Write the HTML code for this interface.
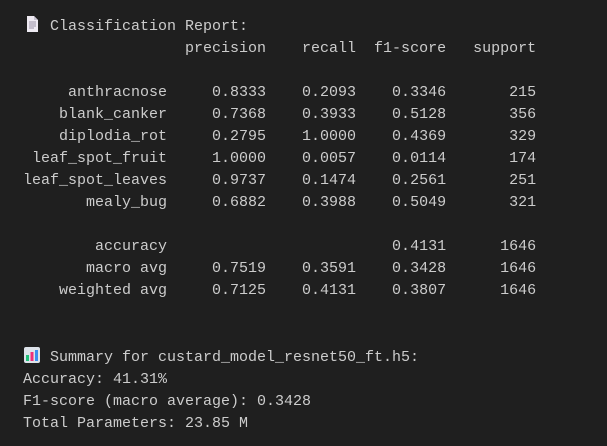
<!DOCTYPE html>
<html><head><meta charset="utf-8"><style>
html,body{margin:0;padding:0;background:#1f1f1f;width:607px;height:446px;overflow:hidden}
pre{margin:0;position:absolute;left:23px;top:15px;font-family:"Liberation Mono",monospace;font-size:15px;line-height:22px;color:#cccccc;white-space:pre}
.ic{display:inline-block;width:18px;height:18px;vertical-align:-3px}
</style></head><body>
<pre><svg class="ic" viewBox="0 0 18 18"><path d="M4 1h7l4 4v12H4z" fill="#eeeaf2"/><path d="M11 1v4h4" fill="#c9c3d2"/><path d="M6 7h7M6 9h7M6 11h7M6 13h5" stroke="#9a92a6" stroke-width="1"/></svg> Classification Report:
                  precision    recall  f1-score   support

     anthracnose     0.8333    0.2093    0.3346       215
    blank_canker     0.7368    0.3933    0.5128       356
    diplodia_rot     0.2795    1.0000    0.4369       329
 leaf_spot_fruit     1.0000    0.0057    0.0114       174
leaf_spot_leaves     0.9737    0.1474    0.2561       251
       mealy_bug     0.6882    0.3988    0.5049       321

        accuracy                         0.4131      1646
       macro avg     0.7519    0.3591    0.3428      1646
    weighted avg     0.7125    0.4131    0.3807      1646


<svg class="ic" viewBox="0 0 18 18"><rect x="1" y="1" width="16" height="16" rx="2" fill="#dde3ea"/><rect x="3" y="9" width="3" height="6" fill="#22c07a"/><rect x="7.5" y="6" width="3" height="9" fill="#f0307a"/><rect x="12" y="4" width="3" height="11" fill="#3a8ef0"/></svg> Summary for custard_model_resnet50_ft.h5:
Accuracy: 41.31%
F1-score (macro average): 0.3428
Total Parameters: 23.85 M</pre>
</body></html>
